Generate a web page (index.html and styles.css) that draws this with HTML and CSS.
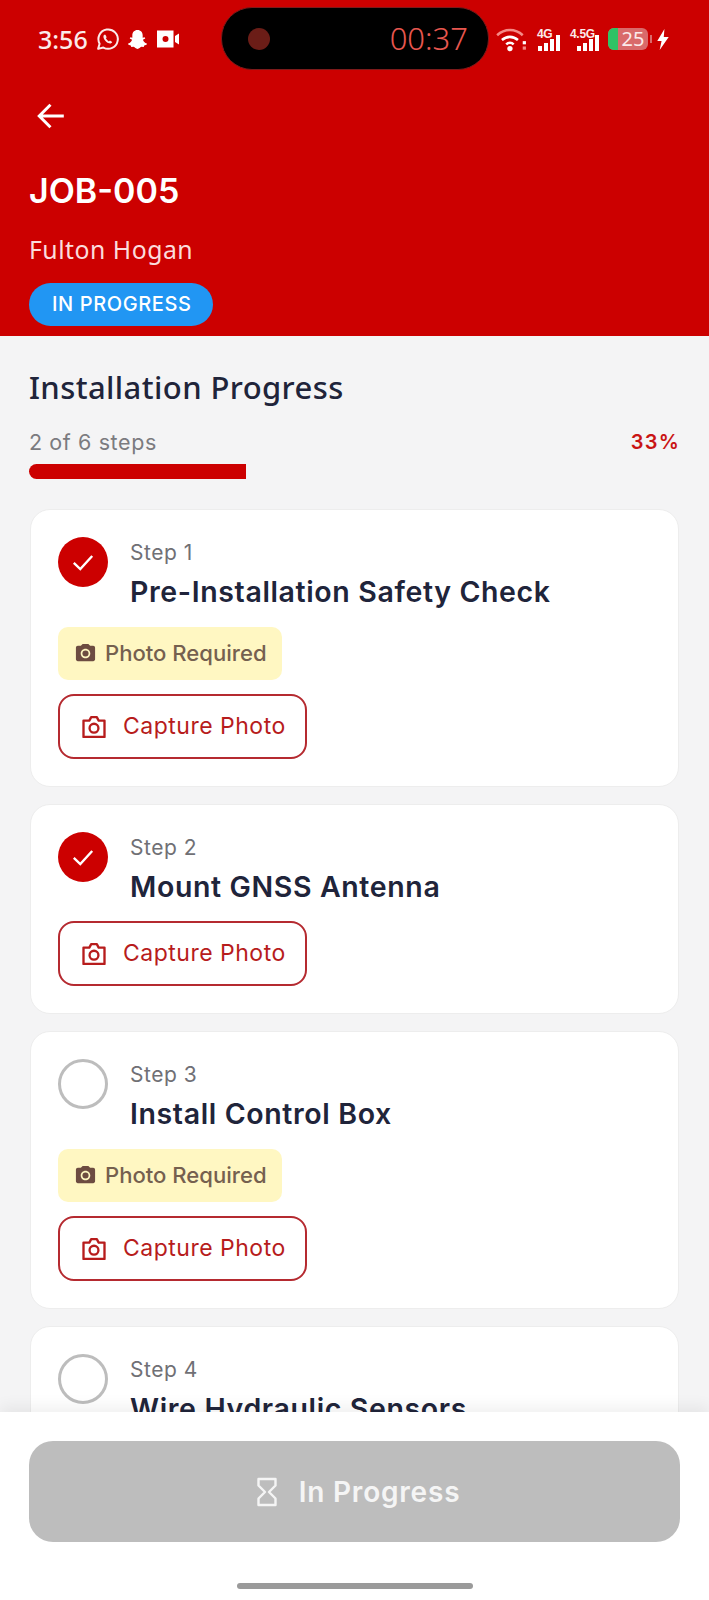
FILE: index.html
```html
<!DOCTYPE html>
<html lang="en">
<head>
<meta charset="utf-8">
<title>JOB-005</title>
<link rel="stylesheet" href="styles.css">
</head>
<body>
<svg class="defs" width="0" height="0" aria-hidden="true">
  <symbol id="cam-outline" viewBox="0 0 24 24">
    <path d="M3 6.500h5l1.600-3h4.800l1.600 3h5v14H3z" fill="none" stroke="currentColor" stroke-width="2" stroke-linejoin="round"/>
    <circle cx="12" cy="13" r="3.800" fill="none" stroke="currentColor" stroke-width="2"/>
  </symbol>
  <symbol id="cam-solid" viewBox="0 0 24 24">
    <path fill="currentColor" d="M9 2 7.170 4H4c-1.100 0-2 .9-2 2v12c0 1.100.9 2 2 2h16c1.100 0 2-.9 2-2V6c0-1.100-.9-2-2-2h-3.170L15 2H9zm3 15c-2.760 0-5-2.240-5-5s2.240-5 5-5 5 2.240 5 5-2.240 5-5 5z"/>
    <circle cx="12" cy="12" r="3.200" fill="currentColor"/>
  </symbol>
  <symbol id="check" viewBox="0 0 24 24">
    <path d="M3.500 12.800 9.500 18.500 20.500 6.500" fill="none" stroke="currentColor" stroke-width="2.200"/>
  </symbol>
</svg>

<div class="app">
  <header class="header">
    <div class="status">
      <div class="status-left">
        <span class="clock">3:56</span>
        <svg class="ic-wa" viewBox="0 0 24 24"><path d="M3 21l1.400-5A9.300 9.300 0 1 1 8 19.700z" fill="none" stroke="currentColor" stroke-width="1.900" stroke-linejoin="round"/><path d="M8.800 7.500c-.9.800-1 2.400 0 4.200 1 1.700 2.600 3.300 4.700 4 1.300.4 2.600-.1 3-1.300l-2.100-1.500-1.100.9c-1.200-.6-2.200-1.600-2.900-2.900l.8-1.100-1.200-2.300z" fill="currentColor"/></svg>
        <svg class="ic-snap" viewBox="0 0 24 24"><path fill="currentColor" d="M12 2c3.400 0 5.400 2.500 5.400 5.600v2.600l2-.6.700 1.300-2.400 1.400c.5 1.800 1.800 3.300 4.100 4l-.3 1.300-2.500.6-.5 1.500-2.500-.1c-1.300.3-2.200 2.200-4 2.200s-2.700-1.900-4-2.200l-2.500.1-.5-1.500-2.500-.6-.3-1.300c2.300-.7 3.600-2.200 4.100-4l-2.400-1.400.7-1.300 2 .6V7.600C6.600 4.500 8.600 2 12 2z"/></svg>
        <svg class="ic-video" viewBox="0 0 24 24"><path fill="currentColor" fill-rule="evenodd" d="M1 3.500h16.500v17H1zM9.500 9a3 3 0 1 0 0 6 3 3 0 0 0 0-6zM19 9l4-2.500v11L19 15z"/></svg>
      </div>
      <div class="status-right">
        <svg class="ic-wifi" viewBox="0 0 30 24"><path d="M2 8.500c7-6.500 17-6.500 24 0" fill="none" stroke="#f58a86" stroke-width="2.400"/><path d="M6.500 13c4.500-4 10.500-4 15 0" fill="none" stroke="#fff" stroke-width="2.400"/><path d="M10.500 17c2-1.800 5-1.800 7 0" fill="none" stroke="#fff" stroke-width="2.400"/><circle cx="14" cy="21" r="2.500" fill="#fff"/><rect x="26" y="14" width="3" height="3" fill="#fff"/><rect x="26" y="19" width="3" height="3" fill="#f58a86"/></svg>
        <div class="sig sig-4g">
          <span class="sig-label">4G</span>
          <div class="bars"><i class="b1"></i><i class="b2"></i><i class="b3"></i><i class="b4"></i></div>
        </div>
        <div class="sig sig-45">
          <span class="sig-label">4.5G</span>
          <div class="bars"><i class="b1"></i><i class="b2"></i><i class="b3"></i><i class="b4"></i></div>
        </div>
        <div class="battery"><span class="batt-fill"></span><span class="batt-num">25</span></div>
        <span class="batt-tip"></span>
        <svg class="ic-bolt" viewBox="0 0 14 22"><path fill="#fff" d="M8.500 0 1 12.500h4.500L3.500 22 13 8.500H7.800z"/></svg>
      </div>
    </div>
    <div class="island">
      <span class="island-cam"></span>
      <span class="island-time">00:37</span>
    </div>

    <div class="back">
      <svg viewBox="0 0 30 30"><path d="M27 15H4M14.500 4.500 4 15l10.500 10.500" fill="none" stroke="#fff" stroke-width="2.800"/></svg>
    </div>
    <h1 class="job-title">JOB-005</h1>
    <p class="job-client">Fulton Hogan</p>
    <span class="badge">IN PROGRESS</span>
  </header>

  <main class="content">
    <h2 class="section-title">Installation Progress</h2>
    <div class="progress-row">
      <span class="progress-steps">2 of 6 steps</span>
      <span class="progress-pct">33%</span>
    </div>
    <div class="track"><div class="fill" style="width:33.400%"></div></div>

    <section class="card">
      <div class="step-head">
        <span class="tick done"><svg viewBox="0 0 24 24"><use href="#check"/></svg></span>
        <div>
          <div class="step-no">Step 1</div>
          <div class="step-name">Pre-Installation Safety Check</div>
        </div>
      </div>
      <div class="chip"><svg viewBox="0 0 24 24"><use href="#cam-solid"/></svg>Photo Required</div>
      <button class="capture capture-after-chip"><svg viewBox="0 0 24 24"><use href="#cam-outline"/></svg>Capture Photo</button>
    </section>

    <section class="card">
      <div class="step-head">
        <span class="tick done"><svg viewBox="0 0 24 24"><use href="#check"/></svg></span>
        <div>
          <div class="step-no">Step 2</div>
          <div class="step-name">Mount GNSS Antenna</div>
        </div>
      </div>
      <button class="capture"><svg viewBox="0 0 24 24"><use href="#cam-outline"/></svg>Capture Photo</button>
    </section>

    <section class="card">
      <div class="step-head">
        <span class="tick"></span>
        <div>
          <div class="step-no">Step 3</div>
          <div class="step-name">Install Control Box</div>
        </div>
      </div>
      <div class="chip"><svg viewBox="0 0 24 24"><use href="#cam-solid"/></svg>Photo Required</div>
      <button class="capture capture-after-chip"><svg viewBox="0 0 24 24"><use href="#cam-outline"/></svg>Capture Photo</button>
    </section>

    <section class="card">
      <div class="step-head">
        <span class="tick"></span>
        <div>
          <div class="step-no">Step 4</div>
          <div class="step-name">Wire Hydraulic Sensors</div>
        </div>
      </div>
    </section>
  </main>

  <footer class="footer">
    <button class="primary">
      <svg viewBox="0 0 22 30"><path d="M2.500 2h17v6.500L13 15l6.500 6.500V28h-17v-6.500L9 15 2.500 8.500z" fill="none" stroke="currentColor" stroke-width="2.400" stroke-linejoin="round"/></svg>
      In Progress
    </button>
    <div class="home-bar"></div>
  </footer>
</div>
</body>
</html>
```

FILE: styles.css
```css
* { box-sizing: border-box; }
html, body { margin: 0; padding: 0; }
body { font-family: "Inter", "Liberation Sans", sans-serif; background: #f4f4f5; }
.defs { display: block; height: 0; }

.app { width: 709px; height: 1600px; display: flex; flex-direction: column; overflow: hidden; }

/* header */
.header { position: relative; flex: none; height: 336px; background: #cc0000; color: #fff; padding: 0 29px; }
.status { height: 78px; display: flex; justify-content: space-between; align-items: center; padding: 0 10px 0 9px; }
.status-left { display: flex; align-items: center; color: #fbeaea; }
.clock { font: 500 25px/1 "Noto Sans", sans-serif; margin-right: 7px; }
.ic-wa { width: 25px; height: 25px; margin-right: 6px; }
.ic-snap { width: 23px; height: 23px; margin-right: 7px; color: #fff; }
.ic-video { width: 24px; height: 24px; color: #fff; }
.status-right { display: flex; align-items: center; }
.ic-wifi { width: 32px; height: 26px; margin-right: 10px; }
.sig { display: flex; flex-direction: column; align-items: flex-end; color: #fbeaea; }
.sig-4g { width: 23px; margin-right: 10px; }
.sig-45 { width: 29px; margin-right: 9px; }
.sig-label { font: 700 12px/12px "Liberation Sans", sans-serif; letter-spacing: -.3px; margin-bottom: -5px; align-self: flex-start; }
.bars { display: flex; align-items: flex-end; gap: 2px; height: 16px; }
.bars i { display: block; width: 4px; background: #fff; }
.b1 { height: 5px; }
.b2 { height: 8px; }
.b3 { height: 12px; }
.b4 { height: 16px; }
.battery { position: relative; width: 40px; height: 22px; border-radius: 6px; background: #d96a6a; text-align: center; }
.batt-fill { position: absolute; left: 0; top: 0; bottom: 0; width: 10px; border-radius: 6px 0 0 6px; background: #2fc365; }
.batt-num { position: relative; display: block; padding-left: 10px; font: 400 20px/22px "Noto Sans", sans-serif; color: #fbeaea; }
.batt-tip { width: 2px; height: 8px; margin: 0 4px 0 2px; background: #d96a6a; }
.ic-bolt { width: 14px; height: 21px; }

.island { position: absolute; left: 221px; top: 7px; width: 268px; height: 63px; background: #000; border: 1px solid #7d1a1a; border-radius: 31px; display: flex; align-items: center; justify-content: space-between; padding: 0 20px 0 26px; }
.island-cam { width: 22px; height: 22px; border-radius: 50%; background: #6b1d17; }
.island-time { font: 300 31px/1 "Noto Sans", sans-serif; color: #e8574f; }

.back { height: 32px; margin: 22px 0 0 6px; }
.back svg { display: block; width: 32px; height: 32px; }
.job-title { margin: 37px 0 0; font: 600 34px/44px "Inter", sans-serif; }
.job-client { margin: 19px 0 0; font: 400 24.800px/34px "Noto Sans", sans-serif; letter-spacing: .5px; color: #fbdcdc; }
.badge { display: inline-block; margin-top: 17px; height: 43px; padding: 0 22px 0 23px; border-radius: 22px; background: #2196f3; font: 500 20px/43px "Inter", sans-serif; letter-spacing: .6px; color: #fff; }

/* content */
.content { flex: 1 1 0; min-height: 0; overflow: hidden; padding: 31px 29px 0; }
.section-title { margin: 0; font: 500 31px/40px "Noto Sans", sans-serif; letter-spacing: .4px; color: #20243a; }
.progress-row { display: flex; justify-content: space-between; align-items: center; height: 28px; margin-top: 21px; }
.progress-steps { font: 400 21.500px/28px "Inter", sans-serif; letter-spacing: .6px; color: #7b7b7f; }
.progress-pct { font: 600 20px/28px "Inter", sans-serif; letter-spacing: 1.200px; color: #c91414; }
.track { height: 15px; margin-top: 8px; }
.fill { height: 100%; background: #cc0000; border-radius: 8px 0 0 8px; }

.card { background: #fff; margin: 30px 0 0 1px; width: 649px; border: 1px solid #ededed; border-radius: 20px; padding: 27px; }
.card + .card { margin-top: 17px; }
.step-head { display: flex; gap: 22px; height: 72px; }
.tick { flex: none; width: 50px; height: 50px; border-radius: 50%; border: 3px solid #bdbdbd; color: #fff; }
.tick.done { background: #cc0000; border: 0; display: flex; align-items: center; justify-content: center; }
.tick svg { width: 26px; height: 26px; }
.step-no { margin-top: 2px; font: 400 21px/28px "Inter", sans-serif; letter-spacing: .5px; color: #707075; }
.step-name { margin-top: 7px; font: 600 28.500px/36px "Inter", sans-serif; letter-spacing: .63px; color: #20243a; white-space: nowrap; }

.chip { display: inline-flex; align-items: center; gap: 8px; margin-top: 18px; height: 53px; padding: 0 15px 0 16px; border-radius: 10px; background: #fff7c2; font: 500 22.100px/1 "Inter", sans-serif; color: #75604f; vertical-align: top; }
.chip svg { width: 23px; height: 23px; color: #6d4c41; }
.capture { display: flex; align-items: center; gap: 15px; width: 249px; height: 65px; margin-top: 17px; padding: 0 0 0 20px; background: #fff; border: 2px solid #b52a30; border-radius: 16px; font: 400 23px/1 "Inter", sans-serif; letter-spacing: .5px; color: #b71c1c; }
.capture-after-chip { margin-top: 14px; }
.capture svg { width: 28px; height: 28px; color: #b71c1c; }

/* footer */
.footer { flex: none; position: relative; height: 188px; background: #fff; padding: 29px 29px 0; box-shadow: 0 -6px 14px rgba(0,0,0,.06); }
.primary { display: flex; align-items: center; justify-content: center; gap: 21px; width: 651px; height: 101px; padding: 0 0 0 7px; border: 0; border-radius: 24px; background: #bdbdbd; font: 600 28px/1 "Inter", sans-serif; letter-spacing: .8px; color: #f5f5f5; }
.primary svg { width: 22px; height: 30px; }
.home-bar { width: 236px; height: 6px; margin: 41px auto 0; border-radius: 3px; background: #9a9a9a; }
```
